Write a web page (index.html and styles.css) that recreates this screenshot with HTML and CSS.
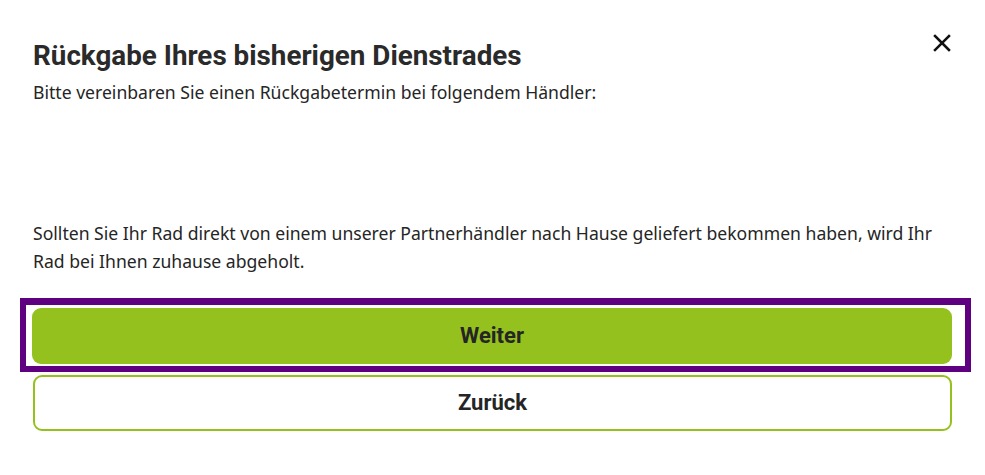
FILE: index.html
```html
<!DOCTYPE html>
<html lang="de">
<head>
<meta charset="utf-8">
<title>Rückgabe Ihres bisherigen Dienstrades</title>
<link rel="stylesheet" href="styles.css">
</head>
<body>
<div class="modal">
  <div class="modal-header">
    <h2 class="modal-title">Rückgabe Ihres bisherigen Dienstrades</h2>
    <button class="close" aria-label="Schließen">
      <svg width="24" height="24" viewBox="0 0 24 24"><path d="M5 5 L19 19 M19 5 L5 19" stroke="#111" stroke-width="2.5" stroke-linecap="square" fill="none"/></svg>
    </button>
  </div>
  <p class="subtitle">Bitte vereinbaren Sie einen Rückgabetermin bei folgendem Händler:</p>
  <div class="dealer"></div>
  <p class="info">Sollten Sie Ihr Rad direkt von einem unserer Partnerhändler nach Hause geliefert bekommen haben, wird Ihr Rad bei Ihnen zuhause abgeholt.</p>
  <div class="actions">
    <div class="focus-ring">
      <button class="btn btn-primary">Weiter</button>
    </div>
    <button class="btn btn-secondary">Zurück</button>
  </div>
</div>
</body>
</html>
```
FILE: styles.css
```css
html, body {
  margin: 0;
  padding: 0;
  background: #fff;
}
body {
  font-family: "Noto Sans", sans-serif;
  color: #252525;
}
.modal {
  padding: 40.5px 33px 0 33px;
}
.modal-header {
  display: flex;
  justify-content: space-between;
  align-items: flex-start;
}
.modal-title {
  margin: 0;
  font-family: Roboto, sans-serif;
  font-weight: 700;
  font-size: 27.8px;
  line-height: 29px;
  color: #2a2a2a;
}
.close {
  margin: -10px -2px 0 0;
  padding: 0;
  border: 0;
  background: none;
  width: 24px;
  height: 24px;
  display: flex;
}
.subtitle {
  margin: 10px 0 0 0;
  font-size: 17.6px;
  line-height: 24px;
}
.dealer {
  height: 115px;
}
.info {
  margin: 0;
  font-size: 17.6px;
  line-height: 28px;
  max-width: 910px;
}
.actions {
  margin-top: 23px;
  display: flex;
  flex-direction: column;
}
.focus-ring {
  margin-left: -13px;
  margin-right: -19px;
  border: 6px solid #5e007f;
  border-top-width: 7px;
  padding: 3px 13px 2px 6px;
}
.btn {
  display: block;
  width: 100%;
  height: 56px;
  border-radius: 9px;
  font-family: Roboto, sans-serif;
  font-weight: 700;
  font-size: 22px;
  color: #252525;
  cursor: pointer;
}
.btn-primary {
  background: #95c11f;
  border: 0;
}
.btn-secondary {
  margin-top: 3px;
  background: #fff;
  border: 2px solid #95c11f;
}
```
